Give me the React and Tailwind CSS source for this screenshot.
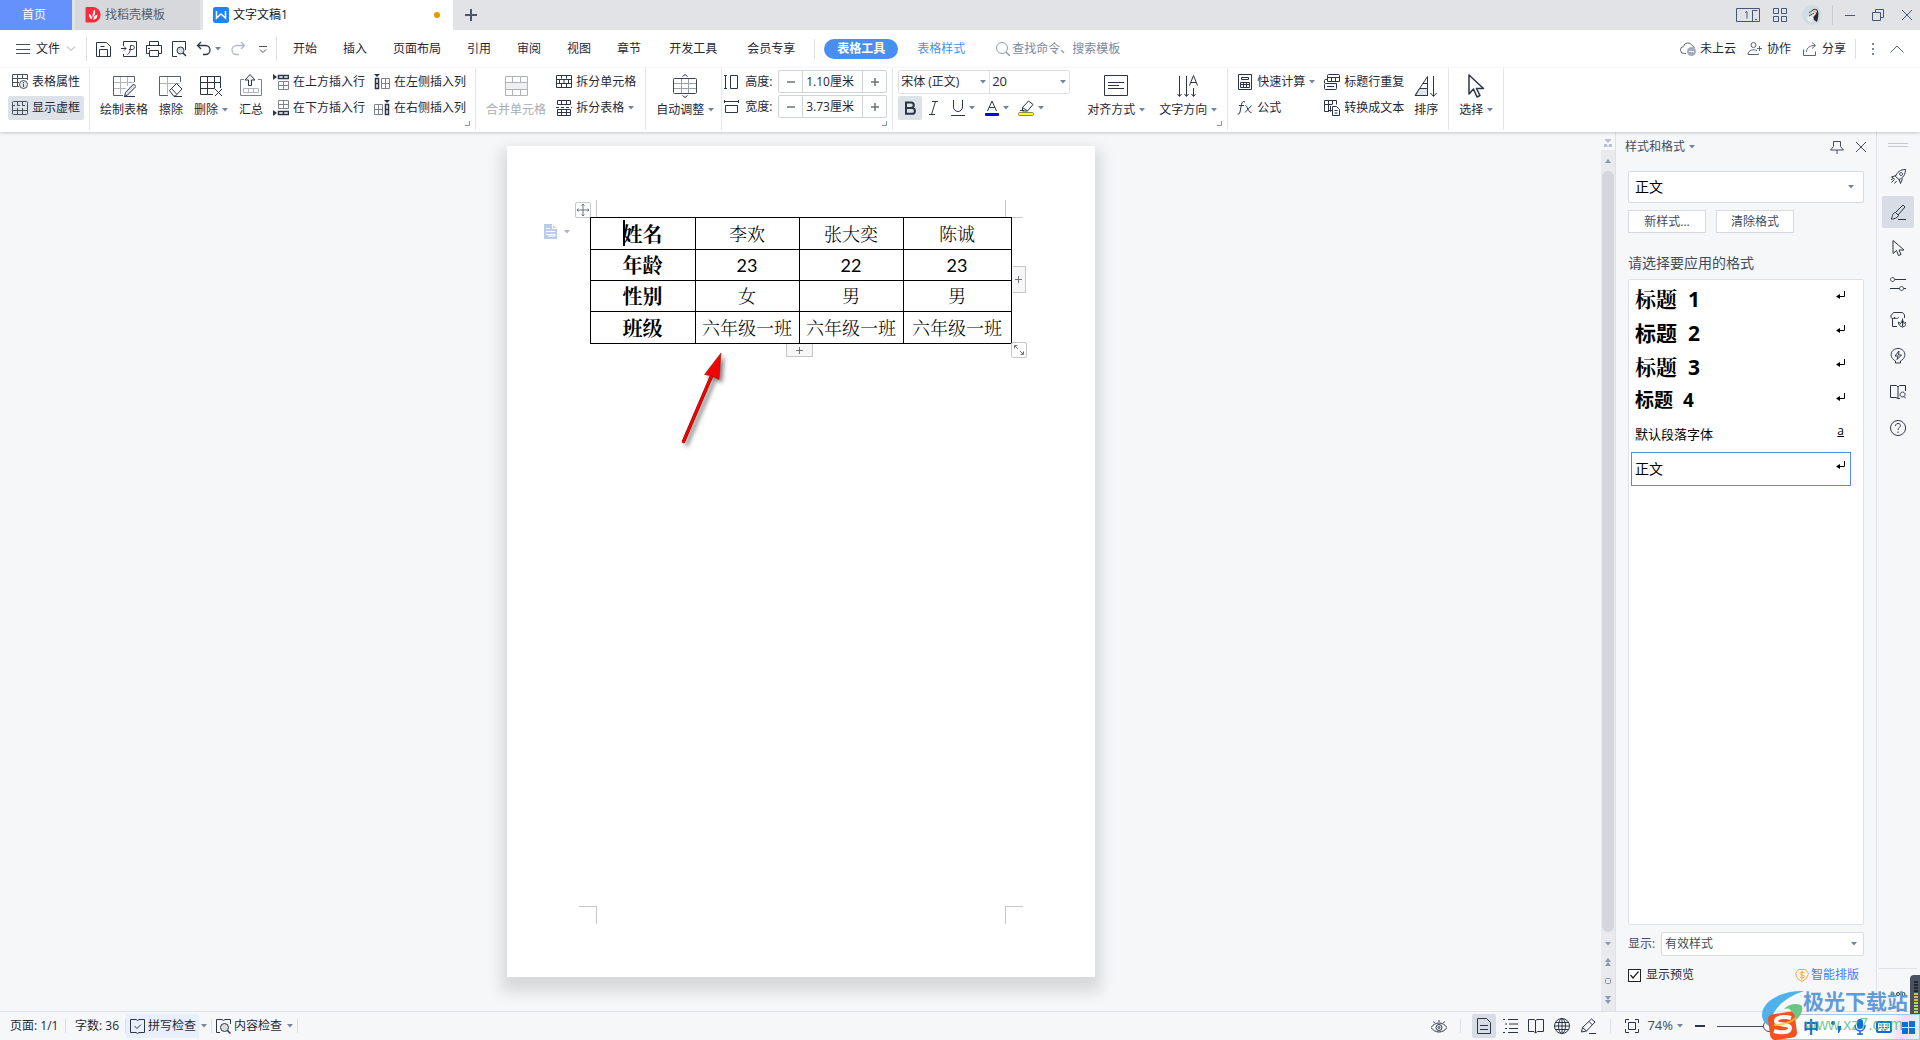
import React, { useState } from "react";

// Shared wrapper for the line icons. Half-pixel coordinates keep strokes crisp.
const Icon = ({ w = 16, h = 16, className = "text-[#2c3547]", children }) => (
  <svg
    width={w}
    height={h}
    viewBox={`0 0 ${w} ${h}`}
    fill="none"
    stroke="currentColor"
    className={`shrink-0 ${className}`}
    aria-hidden="true"
  >
    {children}
  </svg>
);

const Caret = ({ className = "text-[#77839c]" }) => (
  <Icon w={6} h={4} className={className}>
    <path d="M0 0h6L3 3.5z" fill="currentColor" stroke="none" />
  </Icon>
);

const Sep = ({ className = "mx-[5px]" }) => (
  <div className={`h-[62px] w-px shrink-0 bg-[#e6e7ea] ${className}`} />
);

const Corner = () => (
  <Icon w={5} h={5} className="absolute right-0 bottom-1 text-[#8a96ad]">
    <path d="M4.5 0v4.5H0" />
  </Icon>
);

const BigButton = ({ icon, label, caret, className = "text-[#1f2838]" }) => (
  <button className={`flex flex-col items-center gap-1 px-[5px] pt-1.5 ${className}`}>
    {icon}
    <span className="flex h-4 items-center gap-1">
      {label}
      {caret && <Caret />}
    </span>
  </button>
);

const SmallButton = ({ icon, label, caret, active }) => (
  <button
    className={`flex h-6 items-center gap-1 rounded-xs px-1 ${active ? "bg-[#dde2e8]" : ""}`}
  >
    {icon}
    <span className="flex items-center gap-1">
      {label}
      {caret && <Caret />}
    </span>
  </button>
);

const TitleBar = () => (
  <header className="flex h-[30px] shrink-0 items-center bg-[#e1e3e7]">
    <button className="h-full w-[72px] bg-[#6591fd] pr-1 text-white">首页</button>
    <button className="ml-[3px] flex h-full w-[125px] items-center gap-1 bg-[#d6d8dc] pl-2.5 text-[#555d6b]">
      <Icon>
        <path
          d="M1 0h7a7.5 7.5 0 0 1 7.500 7.500v.5A7.500 7.500 0 0 1 8 15.500H1.500a1 1 0 0 1-1-1V1z"
          fill="#fa2a3c"
          stroke="none"
        />
        <path
          d="M9.500 2.500c1.500 3 .5 6-2 8 0-3 .5-6 2-8zM4 6.500c2 1 3 3 3 6-2.500-1-3.500-3.500-3-6zM12.500 7.500c0 3-1.500 5-4.500 5.500.5-3 2-5 4.500-5.500z"
          fill="#fff"
          stroke="none"
        />
      </Icon>
      找稻壳模板
    </button>
    <button className="ml-[3px] flex h-full w-[250px] items-center gap-1 bg-white pr-[13px] pl-2.5 text-[#111827]">
      <Icon>
        <rect width="16" height="16" rx="2.500" fill="#1a86fb" stroke="none" />
        <path d="M3.500 4v7l4.500-4 4.500 4V4" stroke="#fff" strokeWidth="1.500" />
      </Icon>
      文字文稿1
      <span className="ml-auto size-1.5 rounded-full bg-[#e79a00]" />
    </button>
    <button aria-label="新建" className="ml-3">
      <Icon w={12} h={12} className="text-[#4a5670]">
        <path d="M6 0v12M0 6h12" strokeWidth="2" />
      </Icon>
    </button>
    <div className="ml-auto flex items-center pr-[7px] text-[#46557a]">
      <button aria-label="设备">
        <Icon w={24} h={14} className="text-[#46557a]">
          <path d="M.5.500h23v13H.5zM16.500 13.500v-11h5M9 4.500l2-1v7M19 11.500h2" />
        </Icon>
      </button>
      <button aria-label="应用" className="ml-[13px]">
        <Icon w={14} h={14} className="text-[#46557a]">
          <path d="M.5.500h5v5h-5zM8.500.500h5v5h-5zM.5 8.500h5v5h-5zM8.500 8.500h5v5h-5z" />
        </Icon>
      </button>
      <svg width="20" height="20" viewBox="0 0 20 20" className="ml-[15px]" aria-hidden="true">
        <circle cx="10" cy="10" r="10" fill="#cfdde3" />
        <path d="M10 6c1-3 5-3 6 0 1 3 0 8-1 11l-3-2-1-5z" fill="#2b2730" />
        <path d="M5 12l4-2 1-4 3-1 1 4-3 3-1 5-4-1z" fill="#e9ecef" />
        <path d="M7 8l4-3M7 11l5-3" stroke="#4b4045" />
        <circle cx="13" cy="6.500" r="2" fill="#eab9a8" />
      </svg>
      <div className="ml-2.5 h-5 w-px bg-[#c8cbd1]" />
      <button aria-label="最小化" className="ml-3">
        <Icon w={10} h={12} className="text-[#46557a]">
          <path d="M0 6.500h10" />
        </Icon>
      </button>
      <button aria-label="还原" className="ml-[17px]">
        <Icon w={12} h={12} className="text-[#46557a]">
          <path d="M.5 3.500h8v8h-8zM3.500 3V.500h8v8H9" />
        </Icon>
      </button>
      <button aria-label="关闭" className="ml-[17px]">
        <Icon w={12} h={12} className="text-[#46557a]">
          <path d="M1 1l10 10M11 1L1 11" />
        </Icon>
      </button>
    </div>
  </header>
);

const menuTabs = ["开始", "插入", "页面布局", "引用", "审阅", "视图", "章节"];
const extraTabs = ["开发工具", "会员专享"];

const MenuRow = () => (
  <nav className="flex h-[38px] shrink-0 items-center text-[#1f2838]">
    <button className="ml-4 flex items-center gap-1.5">
      <Icon w={14} h={10} className="text-[#4a5260]">
        <path d="M0 .5h14M0 5.500h14M0 9.500h14" />
      </Icon>
      文件
      <Icon w={10} h={6} className="text-[#9aa3b2]">
        <path d="M1 .5l4 4 4-4" />
      </Icon>
    </button>
    <div className="ml-2.5 h-6 w-px bg-[#dddfe3]" />
    <div className="ml-[9px] flex items-center gap-[9px]">
      <button aria-label="保存">
        <Icon>
          <path d="M14.500 15.500H.5v-14h10l4 4zM3.500 15V8.500h8V15M4.500 5.500h4" />
        </Icon>
      </button>
      <button aria-label="输出为PDF">
        <Icon>
          <path d="M2.500 5V.500h13v15h-13V13M0 7.500h5M3 5.500l2 2-2 2M6.500 13.500c2-1 3-4 3-9h2c2.500 0 2.500 4 0 4H8" />
        </Icon>
      </button>
      <button aria-label="打印">
        <Icon>
          <path d="M3.500 4.500v-4h9v4M3.500 12.500h-3v-8h15v8h-3M3.500 9.500h9v6h-9zM2 7.500h2" />
        </Icon>
      </button>
      <button aria-label="打印预览">
        <Icon>
          <path d="M6 15.500H1.500V.500h13V9" />
          <circle cx="9.500" cy="9.500" r="3.500" fill="#d9dde2" />
          <path d="M12 12l3 3" strokeWidth="1.500" />
        </Icon>
      </button>
      <button aria-label="撤销" className="flex items-center gap-[3px]">
        <Icon>
          <path d="M5 1L1.500 4.500 5 8M2 4.500h7.500a4.500 4.500 0 0 1 0 9H7" strokeWidth="1.300" />
        </Icon>
        <Caret />
      </button>
      <button aria-label="恢复">
        <Icon className="text-[#b4bac4]">
          <path d="M11 1l3.500 3.500L11 8M14 4.500H6.500a4.500 4.500 0 0 0 0 9H9" strokeWidth="1.300" />
        </Icon>
      </button>
      <button aria-label="自定义快速访问工具栏">
        <Icon className="text-[#4a5260]">
          <path d="M4 5.500h8M5 8.500l3 3 3-3" />
        </Icon>
      </button>
    </div>
    <div className="ml-[5px] h-6 w-px bg-[#dddfe3]" />
    <div className="ml-[3px] flex items-center">
      {menuTabs.map((tab) => (
        <button key={tab} className="px-[13px]">
          {tab}
        </button>
      ))}
      {extraTabs.map((tab) => (
        <button key={tab} className="px-[15px]">
          {tab}
        </button>
      ))}
    </div>
    <div className="ml-1 h-5 w-px bg-[#dddfe3]" />
    <button className="ml-[9px] h-5 w-[74px] rounded-full bg-[#4a8ff0] font-bold text-white">
      表格工具
    </button>
    <button className="ml-[19px] text-[#4a8ff0]">表格样式</button>
    <label className="ml-[31px] flex items-center gap-0.5">
      <Icon w={14} h={14} className="text-[#8f9ab0]">
        <circle cx="6" cy="6" r="5.500" />
        <path d="M10 10l4 4" strokeWidth="1.500" />
      </Icon>
      <input
        aria-label="查找命令"
        placeholder="查找命令、搜索模板"
        className="w-[120px] bg-transparent outline-none placeholder:text-[#7b88a1]"
      />
    </label>
    <div className="ml-auto flex items-center gap-[11px] pr-4">
      <button className="flex items-center gap-1">
        <Icon className="text-[#5a6577]">
          <path d="M6 12.500H4.500a3.500 3.500 0 0 1-1-7 4.500 4.500 0 0 1 8.500-1 3.500 3.500 0 0 1 2.500 2.500" />
          <circle cx="11.500" cy="10.500" r="4.500" fill="#a4abbd" stroke="none" />
          <path d="M9 10.500h5" stroke="#fff" />
        </Icon>
        未上云
      </button>
      <button className="flex items-center gap-1">
        <Icon className="text-[#5a6577]">
          <circle cx="6.500" cy="4" r="2.500" />
          <path d="M10 9.500c-3-1.500-9-1-9 4h10.500v-1M10 7.500h5M12.500 5v5" />
        </Icon>
        协作
      </button>
      <button className="flex items-center gap-1">
        <Icon className="text-[#5a6577]">
          <path d="M1.500 8.500v6h12v-4M4.500 11c0-4 3-6.500 8.500-6.500M10 1.500l3.500 3-3.500 3" />
        </Icon>
        分享
      </button>
      <div className="-ml-0.5 h-5 w-px bg-[#dddfe3]" />
      <button aria-label="更多" className="pl-1">
        <Icon w={4} h={12} className="text-[#7b8494]">
          <path d="M1 0h2v2H1zM1 5h2v2H1zM1 10h2v2H1z" fill="currentColor" stroke="none" />
        </Icon>
      </button>
      <button aria-label="收起功能区" className="pl-1">
        <Icon w={14} h={8} className="text-[#5a6577]">
          <path d="M.5 7.500L7 1l6.500 6.500" />
        </Icon>
      </button>
    </div>
  </nav>
);

const SpinBox = ({ id, label, value, icon }) => (
  <div className="flex h-[23px] items-center">
    {icon}
    <label htmlFor={id} className="ml-[5px] w-[33px]">
      {label}
    </label>
    <div className="flex h-full w-[109px] items-center rounded-xs border border-[#cfd3da]">
      <button aria-label={`减小${label}`} className="flex h-full w-6 items-center justify-center border-r border-[#cfd3da]">
        <Icon w={8} h={8} className="text-[#6d727b]">
          <path d="M0 4h8" strokeWidth="1.500" />
        </Icon>
      </button>
      <input id={id} defaultValue={value} className="w-[59px] pl-[3px] outline-none" />
      <button aria-label={`增大${label}`} className="flex h-full w-6 items-center justify-center border-l border-[#cfd3da]">
        <Icon w={8} h={8} className="text-[#6d727b]">
          <path d="M0 4h8M4 0v8" strokeWidth="1.500" />
        </Icon>
      </button>
    </div>
  </div>
);

const Ribbon = () => (
  <section className="relative z-10 flex h-16 shrink-0 items-start bg-white pl-2 text-[#1f2838] shadow-[0_1px_3px_rgba(0,0,0,0.2)]">
    <div className="flex flex-col gap-0.5 pt-0.5">
      <SmallButton
        label="表格属性"
        icon={
          <Icon className="text-[#4a5260]">
            <path d="M7 12.500H.5V.500h15V6M.5 4.500h15M.5 8.500H7M5.500.500v12M10.500.500V5" />
            <circle cx="11.500" cy="10.500" r="4" fill="#e6e8eb" />
            <path d="M11.500 9.500V13M11.500 8v1" />
          </Icon>
        }
      />
      <SmallButton
        active
        label="显示虚框"
        icon={
          <Icon className="text-[#4a5260]">
            <rect x=".5" y="1.500" width="15" height="13" rx="1" />
            <path d="M0 5.500h3m2 0h3m2 0h3m2 0h1M1 10.500h14M5.500 2v3m0 3v6M10.500 2v3m0 3v6" />
          </Icon>
        }
      />
    </div>
    <Sep />
    <div className="relative flex h-[62px] items-start gap-px">
      <BigButton
        label="绘制表格"
        icon={
          <Icon w={24} h={24}>
            <path d="M2 8.500h20M2 14.500h12M8.500 2v18M15.500 2v10" stroke="#b0b5bd" />
            <path d="M11 21.500H1.500v-19h21V8" stroke="#565e6b" />
            <path d="M12.500 22.500l1-4 8-8.500 2.500 2.500-8.500 8.500zM12 22.500h11" fill="#dfe3e7" />
          </Icon>
        }
      />
      <BigButton
        label="擦除"
        icon={
          <Icon w={24} h={24}>
            <path d="M1 9.500h20M8.500 2v18" stroke="#b0b5bd" />
            <path d="M9 21.500H.5v-19h21V8" stroke="#565e6b" />
            <path d="M10.500 16.500l7-7 5.500 5.500-6.500 7h-2zM12 14l5.500 6M15 22.500h8" fill="#fff" />
          </Icon>
        }
      />
      <BigButton
        caret
        label="删除"
        icon={
          <Icon w={24} h={24}>
            <path d="M14 20.500H1.500v-18h20V14M1.500 8.500h20M1.500 14.500h14M8.500 2.500v18M15.500 2.500v12M16 15l7 7M23 15l-7 7" />
          </Icon>
        }
      />
      <BigButton
        label="汇总"
        icon={
          <Icon w={24} h={24}>
            <path d="M5 5.500H1.500v16h21v-16H19" stroke="#7c838e" />
            <path d="M4.500 14.500h15v4h-15zM9.500 14.500v4M14.500 14.500v4" stroke="#b0b5bd" />
            <path d="M9.500 11.500V6H6l5-5.500L16 6h-3.500v5.500z" fill="#f1f2f4" />
          </Icon>
        }
      />
      <div className="flex flex-col gap-0.5 pt-0.5">
        <SmallButton
          label="在上方插入行"
          icon={
            <Icon>
              <path d="M0 0l4 3-4 3z" fill="currentColor" stroke="none" />
              <path d="M5.500 1.500h10v3h-10zM10.500 1.500v3" strokeWidth="1.500" />
              <path d="M5.500 7.500h10v8h-10zM5.500 11.500h10M10.500 7.500v8" stroke="#7c838e" />
            </Icon>
          }
        />
        <SmallButton
          label="在下方插入行"
          icon={
            <Icon>
              <path d="M0 10l4 3-4 3z" fill="currentColor" stroke="none" />
              <path d="M5.500 11.500h10v3h-10zM10.500 11.500v3" strokeWidth="1.500" />
              <path d="M5.500.500h10v8h-10zM5.500 4.500h10M10.500.500v8" stroke="#7c838e" />
            </Icon>
          }
        />
      </div>
      <div className="flex flex-col gap-0.5 pt-0.5">
        <SmallButton
          label="在左侧插入列"
          icon={
            <Icon>
              <path d="M0 0h6L3 3z" fill="currentColor" stroke="none" />
              <path d="M1.500 4.500h3v10h-3zM1.500 9.500h3" strokeWidth="1.500" />
              <path d="M7.500 4.500h8v10h-8zM7.500 9.500h8M11.500 4.500v10" stroke="#7c838e" />
            </Icon>
          }
        />
        <SmallButton
          label="在右侧插入列"
          icon={
            <Icon>
              <path d="M10 0h6l-3 3z" fill="currentColor" stroke="none" />
              <path d="M11.500 4.500h3v10h-3zM11.500 9.500h3" strokeWidth="1.500" />
              <path d="M.5 4.500h8v10h-8zM.5 9.500h8M4.500 4.500v10" stroke="#7c838e" />
            </Icon>
          }
        />
      </div>
      <Corner />
    </div>
    <Sep />
    <div className="flex items-start gap-px">
      <BigButton
        label="合并单元格"
        className="text-[#a9adb5]"
        icon={
          <Icon w={24} h={24} className="text-[#b0b3b8]">
            <path d="M1.500 2.500h22v19h-22zM8.500 3v5M16.500 3v5M8.500 16v5M16.500 16v5" />
            <path d="M1.500 8.500h22v7h-22z" fill="#eff0f1" />
          </Icon>
        }
      />
      <div className="flex flex-col gap-0.5 pt-0.5">
        <SmallButton
          label="拆分单元格"
          icon={
            <Icon>
              <path d="M.5 1.500h15v12H.5zM.5 5.500h15M.5 9.500h15M5.500 1.500v3M10.500 1.500v3M8 5.500v4M5.500 9.500v4M10.500 9.500v4M3.500 5.500v4M12.500 5.500v4" />
            </Icon>
          }
        />
        <SmallButton
          caret
          label="拆分表格"
          icon={
            <Icon>
              <path d="M1.500 4.500v-4h13v4zM5.500.500v4M10.500.500v4M0 7.500h3m2 0h3m2 0h3m2 0h1M1.500 9.500h13v6h-13zM1.500 12.500h13M5.500 9.500v6M10.500 9.500v6" />
            </Icon>
          }
        />
      </div>
    </div>
    <Sep />
    <BigButton
      caret
      label="自动调整"
      icon={
        <Icon w={24} h={24}>
          <path d="M1 9.500h22M1 14.500h22M8.500 5v14M15.500 5v14" stroke="#9aa0aa" />
          <rect x=".5" y="4.500" width="23" height="15" rx="1" stroke="#3c4454" />
          <path d="M9.500 2.500l2.500-2 2.500 2M9.500 21.500l2.500 2 2.500-2" />
        </Icon>
      }
    />
    <Sep className="mr-0.5 ml-0.5" />
    <div className="relative flex h-[62px] flex-col gap-0.5 pt-0.5">
      <SpinBox
        id="row-height"
        label="高度:"
        value="1.10厘米"
        icon={
          <Icon>
            <path d="M1.500 1.500v13M0 1.500h3M0 14.500h3M6.500 1.500h7v13h-7z" />
          </Icon>
        }
      />
      <SpinBox
        id="col-width"
        label="宽度:"
        value="3.73厘米"
        icon={
          <Icon>
            <path d="M.5 2.500h14M.5 1v3M14.500 1v3M1.500 6.500h12v7h-12z" />
          </Icon>
        }
      />
      <Corner />
    </div>
    <Sep />
    <div className="flex flex-col gap-0.5 pt-0.5">
      <div className="flex h-6 rounded-xs border border-[#dcdfe4]">
        <div className="flex w-[90px] items-center pr-[3px] pl-0.5">
          <select aria-label="字体" className="w-0 flex-1 appearance-none outline-none">
            <option>宋体 (正文)</option>
          </select>
          <Caret />
        </div>
        <div className="flex w-20 items-center border-l border-[#dcdfe4] pr-[3px] pl-0.5">
          <select aria-label="字号" className="w-0 flex-1 appearance-none text-[13px] outline-none">
            <option>20</option>
          </select>
          <Caret />
        </div>
      </div>
      <div className="flex h-6 items-center">
        <button aria-label="加粗" className="flex size-6 items-center justify-center rounded-xs bg-[#dde2e8]">
          <Icon w={14} h={14}>
            <path d="M3 1.500h5a2.700 2.700 0 0 1 0 5.500H3zM3 7h6a2.900 2.900 0 0 1 0 5.800H3z" strokeWidth="2" />
          </Icon>
        </button>
        <button aria-label="倾斜" className="flex size-6 items-center justify-center">
          <Icon w={10} h={16}>
            <path d="M3 1.500h6M0 14.500h6M6.500 1.500l-4 13" />
          </Icon>
        </button>
        <button aria-label="下划线" className="flex w-[34px] items-center justify-center gap-1">
          <Icon w={14} h={16}>
            <path d="M2.500 0v7a4.500 4.500 0 0 0 9 0V0M0 15.500h14" />
          </Icon>
          <Caret />
        </button>
        <button aria-label="字体颜色" className="flex w-[34px] items-center justify-center gap-1">
          <Icon w={14} h={16}>
            <path d="M2.500 11L7 1l4.500 10M4 7.500h6" />
            <rect y="13" width="14" height="3" rx="1" fill="#00f" stroke="none" />
          </Icon>
          <Caret />
        </button>
        <button aria-label="突出显示" className="flex w-[34px] items-center justify-center gap-1">
          <Icon>
            <path d="M4.500 7.500l6-6.500 4.500 3.500-5.500 6.500h-5zM4.500 7.500l5 3.500M6 10.500h-4" />
            <rect x=".5" y="12.500" width="15" height="3" rx="1" fill="#ff0" stroke="#8b8b55" />
          </Icon>
          <Caret />
        </button>
      </div>
    </div>
    <div className="relative ml-3 flex h-[62px] items-start gap-1">
      <BigButton
        caret
        label="对齐方式"
        icon={
          <Icon w={24} h={24}>
            <path d="M.5 1.500h23v20H.5zM4 8.500h16M4 11.500h11M4 14.500h16" />
          </Icon>
        }
      />
      <BigButton
        caret
        label="文字方向"
        icon={
          <Icon w={24} h={24}>
            <path d="M3.500 2v20M1.500 20l2 2.500 2-2.500M10.500 2v20M8.500 20l2 2.500 2-2.500M17.500 14v8M15.500 20l2 2.500 2-2.500M13.500 11.500L17.500 1.500l4 10M15 8.500h5" />
          </Icon>
        }
      />
      <Corner />
    </div>
    <Sep />
    <div className="flex items-start gap-px">
      <div className="flex flex-col gap-0.5 pt-0.5">
        <SmallButton
          caret
          label="快速计算"
          icon={
            <Icon>
              <path d="M1.500.500h13v15h-13zM4.500 3.500h7v2h-7zM3.500 8.500h9v5h-9zM3.500 10.500h9M6.500 8.500v5M9.500 8.500v5" />
            </Icon>
          }
        />
        <SmallButton
          label="公式"
          icon={
            <Icon>
              <path d="M8 2c-2-1-3 0-3.500 2.500L3 12c-.5 2-1.500 2.500-2.500 2M2 5.500h5M8.500 5.500c2 0 2 7 6 7M14.500 5.500L8 12.500" />
            </Icon>
          }
        />
      </div>
      <div className="flex flex-col gap-0.5 pt-0.5">
        <SmallButton
          label="标题行重复"
          icon={
            <Icon>
              <path d="M3.500 3.500v-2a1 1 0 0 1 1-1h10a1 1 0 0 1 1 1v4M3.500 3.500h12v4h-12zM7.500 3.500v4M11.500 3.500v4M3 9.500H1.500a1 1 0 0 0-1 1v4a1 1 0 0 0 1 1h10a1 1 0 0 0 1-1V9.500H2M3 12.500h7M.5 9V6.500a1 1 0 0 1 1-1h2" />
            </Icon>
          }
        />
        <SmallButton
          label="转换成文本"
          icon={
            <Icon>
              <path d="M5 11.500H.5V.500h12v4M.5 4.500H8M4.500.500v11M8.500.500v4M6.500 6v5M4.500 9.500l2 2 2-2M8.500 15.500v-9h4l3 3v6zM10.500 10.500h3M10.500 13h3" />
            </Icon>
          }
        />
      </div>
      <BigButton
        label="排序"
        icon={
          <Icon w={24} h={24}>
            <path d="M1 21.500L13.500 2.500v19zM8.500 9.500h5M5.500 14.500h8" />
            <path d="M1.500 21.500l4-7h8v7z" fill="#e3e5e8" />
            <path d="M19.500 2v20M16.500 19l3 3.500 3-3.500" />
          </Icon>
        }
      />
    </div>
    <Sep />
    <BigButton
      caret
      label="选择"
      icon={
        <Icon w={24} h={24}>
          <path d="M5 1v19l4.500-5 3.500 8 3-1.500-3.500-7h7z" strokeWidth="1.500" strokeLinejoin="round" />
        </Icon>
      }
    />
    <Sep />
  </section>
);

const rows = [
  { head: "姓名", cells: ["李欢", "张大奕", "陈诚"], className: "h-8" },
  { head: "年龄", cells: ["23", "22", "23"], className: "h-[31px] font-normal" },
  { head: "性别", cells: ["女", "男", "男"], className: "h-[31px]" },
  { head: "班级", cells: ["六年级一班", "六年级一班", "六年级一班"], className: "h-8" },
];

const DocumentPage = () => (
  <main className="flex min-w-0 flex-1 justify-center overflow-hidden pt-3.5">
    <article className="relative h-[831px] w-[588px] shrink-0 bg-white pt-[71px] pl-[83px] shadow-[0_9px_14px_6px_rgba(0,0,0,0.12)]">
      {/* page margin marks */}
      <svg className="absolute inset-0 size-full" viewBox="0 0 588 831" fill="none" stroke="#c4c6c8" aria-hidden="true">
        <path d="M89.500 54v17M72 71.500h18M498.500 54v17M498 71.500h18M89.500 778v-18M72 760.500h18M498.500 778v-18M498 760.500h18" />
      </svg>
      <table className="relative w-[422px] table-fixed border-collapse bg-white text-center font-['Lato','Noto_Serif_CJK_SC','Noto_Sans_CJK_SC',sans-serif] text-lg leading-6 text-black">
        <colgroup>
          <col className="w-[105px]" />
          <col className="w-[104px]" />
          <col className="w-[104px]" />
          <col className="w-[108px]" />
        </colgroup>
        <tbody className="font-light">
          {rows.map((row) => (
            <tr key={row.head} className={row.className}>
              <th scope="row" className="border border-black p-0 text-xl leading-6 font-bold">
                {row.head}
              </th>
              {row.cells.map((cell, i) => (
                <td key={i} className="border border-black p-0">
                  {cell}
                </td>
              ))}
            </tr>
          ))}
        </tbody>
      </table>
      {/* text cursor */}
      <span className="absolute top-[74px] left-[116px] h-[26px] w-0.5 bg-black" />
      <button aria-label="移动表格" className="absolute top-14 left-[68px] rounded-xs border border-[#c4c6c8] bg-white">
        <Icon w={14} h={14} className="text-[#6d727b]">
          <path d="M7 1v12M1 7h12M5.500 2.500L7 1l1.500 1.500M5.500 11.500L7 13l1.500-1.500M2.500 5.500L1 7l1.500 1.500M11.500 5.500L13 7l-1.500 1.500" />
        </Icon>
      </button>
      <button aria-label="段落选项" className="absolute top-[78px] left-[37px] flex items-center gap-[7px]">
        <Icon w={13} h={15}>
          <path d="M0 0h8l5 5v10H0z" fill="#b9cdea" stroke="none" />
          <path d="M8.500 0v4.500H13M2 4.500h4M2 7.500h9M2 10.500h9v1.500H4" stroke="#fff" />
        </Icon>
        <Caret className="text-[#b0b5bd]" />
      </button>
      <button aria-label="添加列" className="absolute top-[120px] left-[506px] flex h-[27px] w-[13px] items-center justify-center border border-l-0 border-[#c4c6c8] bg-[#f7f7f7]">
        <Icon w={7} h={7} className="text-[#6d727b]">
          <path d="M3.500 0v7M0 3.500h7" />
        </Icon>
      </button>
      <button aria-label="添加行" className="absolute top-[198px] left-[279px] flex h-[13px] w-[27px] items-center justify-center border border-t-0 border-[#c4c6c8] bg-[#f7f7f7]">
        <Icon w={7} h={7} className="text-[#6d727b]">
          <path d="M3.500 0v7M0 3.500h7" />
        </Icon>
      </button>
      <button aria-label="调整表格大小" className="absolute top-[196px] left-[504px] rounded-xs border border-[#c4c6c8] bg-white">
        <Icon w={14} h={14} className="text-[#6d727b]">
          <path d="M2.500 5.500v-3h3M3 3l3 3M11.500 8.500v3h-3M11 11L8 8" />
        </Icon>
      </button>
      {/* annotation arrow */}
      <svg className="absolute top-[204px] left-[168px] drop-shadow-[3px_3px_2px_rgba(0,0,0,0.5)]" width="52" height="96" viewBox="0 0 52 96" aria-hidden="true">
        <path d="M8.500 91.500L37 25" stroke="#8c1010" strokeWidth="3.500" strokeLinecap="round" />
        <path d="M8.500 91.500L37 25" stroke="#f40000" strokeWidth="2.500" strokeLinecap="round" />
        <path d="M46 3L29.500 24.500l7.500 1.500 7 3.500z" fill="#f40000" stroke="#8c1010" strokeWidth=".5" />
      </svg>
    </article>
  </main>
);

const ScrollBar = () => (
  <div className="flex w-3.5 shrink-0 flex-col items-center">
    <div className="flex h-[18px] items-center pt-1">
      <Icon w={8} h={8}>
        <path d="M1 0h6v1L4.500 3.500h-1L1 1zM0 5h3v3H0zM5 5h3v3H5zM3 6.500h2v1H3z" fill="#b9c0cf" stroke="none" />
      </Icon>
    </div>
    <div className="flex w-full flex-1 flex-col items-center bg-[#e9eaee]">
      <div className="flex h-[21px] items-center">
        <Icon w={6} h={4} className="text-[#8a96ad]">
          <path d="M0 4h6L3 0z" fill="currentColor" stroke="none" />
        </Icon>
      </div>
      <div className="w-3 flex-1 rounded-full bg-[#d4d6de]" />
      <div className="flex h-[79px] flex-col items-center gap-3 pt-2.5">
        <Caret className="text-[#8a96ad]" />
        <Icon w={6} h={8} className="text-[#8a96ad]">
          <path d="M0 4h6L3 0zM0 8h6L3 4z" fill="currentColor" stroke="none" />
        </Icon>
        <Icon w={6} h={6} className="text-[#8a96ad]">
          <rect x=".5" y=".5" width="5" height="5" rx="1" />
        </Icon>
        <Icon w={6} h={8} className="text-[#8a96ad]">
          <path d="M0 0h6L3 4zM0 4h6L3 8z" fill="currentColor" stroke="none" />
        </Icon>
      </div>
    </div>
  </div>
);

const styleItems = [
  { name: "标题 1", className: "font-['Noto_Sans','Noto_Serif_CJK_SC',serif] text-[21px] font-bold" },
  { name: "标题 2", className: "font-['Noto_Sans','Noto_Sans_CJK_SC',sans-serif] text-[21px] font-bold" },
  { name: "标题 3", className: "font-['Noto_Sans','Noto_Serif_CJK_SC',serif] text-[21px] font-bold" },
  { name: "标题 4", className: "font-['Noto_Sans','Noto_Sans_CJK_SC',sans-serif] text-[19px] font-bold" },
  { name: "默认段落字体", className: "text-[13px]" },
  { name: "正文", className: "text-sm" },
];

const ReturnMark = () => (
  <Icon w={10} h={9} className="text-black">
    <path d="M8.500 0v5.500H2" />
    <path d="M0 5.500l4-2.500v5z" fill="currentColor" stroke="none" />
  </Icon>
);

const StylePanel = () => {
  const [selected, setSelected] = useState("正文");
  const [preview, setPreview] = useState(true);

  return (
    <aside className="flex w-[262px] shrink-0 flex-col border-x border-[#dfe1e6] px-3 text-[#434b5c]">
      <div className="-mr-0.5 -ml-[3px] flex h-[30px] items-center gap-1 text-xs">
        样式和格式
        <Caret />
        <button aria-label="固定" className="ml-auto">
          <Icon w={14} h={14} className="text-[#434b5c]">
            <path d="M3.500 1.500h7v5l3 3.500h-13l3-3.500zM7 10v4" />
          </Icon>
        </button>
        <button aria-label="关闭窗格" className="ml-2">
          <Icon w={10} h={10} className="text-[#434b5c]">
            <path d="M0 0l10 10M10 0L0 10" />
          </Icon>
        </button>
      </div>
      <div className="mt-[9px] flex h-8 shrink-0 items-center rounded-xs border border-[#d7dae1] bg-white pr-[9px] pl-1.5">
        <select aria-label="当前样式" className="flex-1 appearance-none text-sm text-black outline-none">
          <option>正文</option>
        </select>
        <Caret />
      </div>
      <div className="mt-[7px] flex gap-2.5">
        <button className="h-[23px] w-[78px] border border-[#d7dae1] bg-white">新样式...</button>
        <button className="h-[23px] w-[78px] border border-[#d7dae1] bg-white">清除格式</button>
      </div>
      <h2 className="mt-5 mb-1.5 text-sm leading-5">请选择要应用的格式</h2>
      <ul className="min-h-0 flex-1 rounded-xs border border-[#dfe1e6] bg-white pt-0.5 pr-3 pl-0.5 text-black">
        {styleItems.map((item) => (
          <li key={item.name}>
            <button
              onClick={() => setSelected(item.name)}
              className={`flex h-[34px] w-full items-center justify-between border pr-1 pl-[3px] ${
                selected === item.name ? "border-[#4a8fe6]" : "border-transparent"
              }`}
            >
              <span className={`whitespace-pre ${item.className}`}>{item.name.replace(" ", "  ")}</span>
              <span className="pb-2">
                {item.name === "默认段落字体" ? (
                  <span className="pr-0.5 text-xs leading-3 underline">a</span>
                ) : (
                  <ReturnMark />
                )}
              </span>
            </button>
          </li>
        ))}
      </ul>
      <div className="mt-[7px] flex items-center">
        <label htmlFor="style-filter" className="w-[33px]">
          显示:
        </label>
        <div className="flex h-6 flex-1 items-center rounded-xs border border-[#d7dae1] bg-white pr-1.5 pl-[3px]">
          <select id="style-filter" className="flex-1 appearance-none outline-none">
            <option>有效样式</option>
          </select>
          <Caret />
        </div>
      </div>
      <div className="mt-[11px] mb-7 flex h-4 items-center">
        <label className="flex items-center gap-[5px] text-[#1f2838]">
          <span className="grid size-[13px] place-items-center">
            <input
              type="checkbox"
              checked={preview}
              onChange={(e) => setPreview(e.target.checked)}
              className="col-start-1 row-start-1 size-[13px] appearance-none border border-[#222] bg-white"
            />
            {preview && (
              <Icon w={9} h={8} className="pointer-events-none col-start-1 row-start-1 text-[#222]">
                <path d="M.5 4l2.500 3 5.500-6.500" strokeWidth="1.200" />
              </Icon>
            )}
          </span>
          显示预览
        </label>
        <a href="#layout" className="mr-[5px] ml-auto flex items-center gap-0.5 text-[#3f7bf5]">
          <Icon w={14} h={14} className="text-[#f0a93a]">
            <path d="M3.500 1.500h7l3 4-2 5-4.500 3-4.500-3-2-5zM9.500 5C8 3.500 5 4 5 5.500c0 2 4.500 1 4.500 3 0 1.500-3 2-4.500.5M7 3v8.500" />
          </Icon>
          智能排版
        </a>
      </div>
    </aside>
  );
};

const sideIcons = [
  {
    label: "快速工具",
    path: "M5.500 8.500C7 4 10.500 1.500 15.500 1.500c0 5-2.500 8.500-6.500 10zM6 7.500L1.500 9l3 2M9 11.500l1.500 4 2-5M4.500 11.500l-3 3M6.500 13l-2 2.500M3 10.500l-2 1.500M11 4.500a1.500 1.500 0 1 0 .1 0",
  },
  {
    label: "样式和格式",
    active: true,
    path: "M5.500 8.500L13 1l2 2-7 8M5.500 8.500l3 3c-1 2.500-4 3.500-7.500 3.500 1-1 1-2 1.500-3.500.500-2 1.500-3 3-3M8 15.500h8",
  },
  { label: "选择窗格", path: "M3 .5v13l3.500-3 2 5 2.500-1-2-4.500h5z" },
  {
    label: "属性",
    path: "M5 3.500h11M2.500 1.500a2 2 0 1 0 .1 0M0 12.500h9.500M11.500 10.500a2 2 0 1 0 .1 0M14 12.500h2",
  },
  {
    label: "稻壳资源",
    path: "M7 14.500H2.500V6M1.500 3l2-2.500h9l2 2.500v3M1 3v2c0 2 3.500 2 3.500 0v2M4.500 5c0 2 4 2 4 0M12.500 6.500v8M12.500 15c-2.500-.500-4-2-4-5l2.500 2M12.500 15c2.500-.500 4-2 3.500-5l-2.500 2M11 11l1.500-3 1.500 3",
  },
  {
    label: "智能助手",
    path: "M5.500 13C-2 9 1 .5 8 .5s10 8.500 2.500 12.500v2h-5zM9 3L5 8h3l-1 3.500L11.500 7h-3z",
  },
  {
    label: "查找内容",
    path: "M8 14.500V3L6.500 1.500h-6v12H6zM8 3l1.500-1.500h6V7M8 14.500h2M12.500 8a2.500 2.500 0 1 0 .1 0M14 12.500l2 2",
  },
  {
    label: "帮助",
    path: "M8 .5a7.500 7.500 0 1 0 .1 0M5.500 6c0-3.500 5-3 5-.5 0 2-2.500 2-2.500 4.500M8 11.500v1.500",
  },
];

const SideStrip = () => (
  <div className="flex w-[43px] shrink-0 flex-col items-center pt-[11px] pr-0.5">
    <div className="mb-[13px] h-1 w-5 border-y border-[#c4c8d0]" />
    <div className="flex flex-col gap-1">
      {sideIcons.map((item) => (
        <button
          key={item.label}
          aria-label={item.label}
          className={`flex size-8 items-center justify-center rounded-xs ${item.active ? "bg-[#d8dde5]" : ""}`}
        >
          <Icon>
            <path d={item.path} />
          </Icon>
        </button>
      ))}
    </div>
    <div className="mt-auto h-px w-[38px] bg-[#dfe1e6]" />
    <button aria-label="更多工具" className="mt-[22px] mb-3.5">
      <Icon w={16} h={6}>
        <circle cx="2.500" cy="3" r="1.500" />
        <circle cx="8" cy="3" r="1.500" />
        <circle cx="13.500" cy="3" r="1.500" />
      </Icon>
    </button>
  </div>
);

const StatusSep = ({ className = "" }) => <div className={`h-3.5 w-px bg-[#dcdfe4] ${className}`} />;

const StatusBar = () => (
  <footer className="flex h-[29px] shrink-0 items-center border-t border-[#dfe1e6] bg-[#f5f7f9] pl-2.5 text-[#1f2838]">
    <span className="w-[55px]">页面: 1/1</span>
    <StatusSep />
    <span className="ml-[9px] w-[50px]">字数: 36</span>
    <StatusSep />
    <button className="flex h-6 items-center gap-[3px] bg-[#e7f0fc] pr-[3px] pl-1">
      <Icon w={15} h={15}>
        <path d="M6 .5H.5v13H6l1.500 1 1.500-1h5.500V.500H9L7.500 1.500zM4.500 7l2.500 2.500 4-4" />
      </Icon>
      拼写检查
    </button>
    <Caret className="ml-0.5 text-[#77839c]" />
    <StatusSep className="ml-1" />
    <button className="ml-1 flex items-center gap-[3px]">
      <Icon w={15} h={15}>
        <path d="M4 13.500H.5V.500H6l1.500 1L9 .5h5.500V5" />
        <circle cx="8.500" cy="8.500" r="4" fill="#d9dde2" />
        <path d="M11.500 11.500l3 3" strokeWidth="1.500" />
      </Icon>
      内容检查
      <Caret className="ml-0.5 text-[#77839c]" />
    </button>
    <StatusSep className="ml-1" />
    <div className="ml-auto flex items-center">
      <button aria-label="护眼模式">
        <Icon>
          <path d="M0 9.500c4-6 12-6 16 0-4 6-12 6-16 0zM8 2v2M2.500 3.500l1 1.500M13.500 3.500l-1 1.500" />
          <circle cx="8" cy="9.500" r="3" />
          <circle cx="8" cy="9.500" r="1" />
        </Icon>
      </button>
      <StatusSep className="ml-[13px]" />
      <button aria-label="页面视图" className="ml-[11px] flex size-6 items-center justify-center rounded-xs bg-[#d8dde5]">
        <Icon>
          <path d="M1.500.500h9l4 4v11h-13zM4 7.500h8M4 11.500h8" />
        </Icon>
      </button>
      <button aria-label="大纲" className="ml-[7px]">
        <Icon>
          <path d="M0 1.500h2M5 1.500h10M2 6h2M6 6h9M2 10.500h2M6 10.500h9M0 14.500h2M5 14.500h10" />
        </Icon>
      </button>
      <button aria-label="阅读版式" className="ml-[9px]">
        <Icon>
          <path d="M7.500 15V2.500L6 1.500H.5v12H6zM7.500 2.500L9 1.500h6.500v12H9.500l-2 1.500" />
        </Icon>
      </button>
      <button aria-label="Web版式" className="ml-2.5">
        <Icon>
          <circle cx="8" cy="8" r="7.500" />
          <ellipse cx="8" cy="8" rx="3.500" ry="7.500" />
          <path d="M.5 8h15M8 .5v15M1.500 4.500h13M1.500 11.500h13" />
        </Icon>
      </button>
      <button aria-label="写作模式" className="ml-2.5">
        <Icon>
          <path d="M1.500 14l1-4.500 9-8.500 3.500 3-8.500 9zM2.500 9.500l4 3.500M9 3.500l3.500 3.500M9 15.500h7" />
        </Icon>
      </button>
      <StatusSep className="ml-3.5" />
      <button aria-label="适合页面" className="ml-3.5">
        <Icon w={14} h={14}>
          <path d="M.5 4V.500H4M10 .5h3.500V4M13.500 10v3.500H10M4 13.500H.5V10M3.500 3.500h7v7h-7z" />
        </Icon>
      </button>
      <button className="ml-2 flex items-center gap-1 text-[13px] text-[#434b5c]">
        74%
        <Caret />
      </button>
      <button aria-label="缩小" className="ml-3">
        <Icon w={10} h={4}>
          <path d="M0 2h10" strokeWidth="2" />
        </Icon>
      </button>
      <input
        type="range"
        aria-label="显示比例"
        min="10"
        max="200"
        defaultValue="74"
        className="mr-[53px] ml-3 h-3 w-[150px] appearance-none bg-[linear-gradient(#434b5c,#434b5c)] bg-[length:100%_1px] bg-center bg-no-repeat [&::-webkit-slider-thumb]:size-3 [&::-webkit-slider-thumb]:appearance-none [&::-webkit-slider-thumb]:rounded-full [&::-webkit-slider-thumb]:border [&::-webkit-slider-thumb]:border-[#434b5c] [&::-webkit-slider-thumb]:bg-white"
      />
    </div>
  </footer>
);

const meterBars = [0, 1, 2, 3, 4, 5, 6, 7, 8, 9, 10];

// Input method toolbar, site logo and level meter floating over the status bar
const FloatingTools = () => (
  <div className="absolute right-0 bottom-0 z-20 h-[65px] w-[160px]">
    <div className="absolute right-0 bottom-0 flex h-[26px] w-[142px] items-center border border-[#a9c6e6] bg-[linear-gradient(100deg,#fff_75%,#f3d9fa_88%,#d9fafa)] pl-6 text-[#0a6fd6]">
      <span className="w-[27px] text-base leading-6 font-bold">中</span>
      <Icon w={12} h={14} className="mr-3 text-[#0a6fd6]">
        <circle cx="3" cy="3" r="2" fill="currentColor" stroke="none" />
        <path d="M8 6h3v3l-2 4H8z" fill="currentColor" stroke="none" />
      </Icon>
      <Icon w={12} h={16} className="mr-2.5 text-[#0a6fd6]">
        <rect x="3" width="6" height="10" rx="3" fill="currentColor" stroke="none" />
        <path d="M1 6c0 8 10 8 10 0M6 12v4M3 15h6" strokeWidth="1.500" />
      </Icon>
      <Icon w={16} h={12} className="mr-2.5 text-[#0a6fd6]">
        <rect x="1" y="1" width="14" height="10" rx="1" strokeWidth="2" />
        <path d="M3 4h10M3 6.500h10M5 9h6" strokeDasharray="2 1" />
      </Icon>
      <Icon w={13} h={13} className="text-[#0a6fd6]">
        <path d="M0 1h6v5H0zM7 0h6v6H7zM0 7h6v6H0zM7 7h6v6H7z" fill="currentColor" stroke="none" />
      </Icon>
    </div>
    <svg className="absolute bottom-0 left-0" width="46" height="52" viewBox="0 0 46 52" aria-hidden="true">
      <path d="M44 3C24 2 2 12 2 27c0 6 5 11 10 12C8 26 22 10 44 3z" fill="#4fb2ea" />
      <path d="M40 6C24 12 14 22 12 32" stroke="#fff" strokeWidth="1.500" fill="none" />
      <path d="M24 21c5-6 15-6 18-3 2 9-8 20-26 22 8-5 16-10 15-17-1-3-4-3-7-2z" fill="#6cc487" />
      <rect x="9" y="25" width="27" height="26" rx="5" fill="#f4511e" transform="rotate(-8 22 38)" />
      <path d="M31 30c-7-2-15-1-15 3 0 5 14 2 14 7 0 5-9 5-16 3" stroke="#fff" strokeWidth="4" fill="none" />
      <path d="M14 37c8 0 16-2 22-7" stroke="#e9c646" strokeWidth="2" fill="none" opacity=".8" />
    </svg>
    <span className="absolute top-3.5 left-[43px] text-[21px] leading-6 font-bold text-[#5f9bd8]">
      极光下载站
    </span>
    <span className="absolute top-10 left-[45px] font-['Liberation_Sans',sans-serif] text-base leading-5 text-[#3fae62]/70">
      www.xz7.com
    </span>
    <div className="absolute top-0 right-0 flex h-[39px] w-2.5 flex-col gap-px rounded-tl-sm bg-[#4b5160] pt-1.5 pl-1">
      {meterBars.map((n) => (
        <div key={n} className={`h-0.5 w-1 ${n < 4 ? "bg-[#24272f]" : n < 7 ? "bg-[#e0b84a]" : "bg-[#b4dc50]"}`} />
      ))}
    </div>
  </div>
);

const App = () => {
  return (
    <div className="relative flex h-screen flex-col overflow-hidden bg-white font-['Open_Sans','Noto_Sans_CJK_SC',sans-serif] text-xs whitespace-nowrap">
      <TitleBar />
      <MenuRow />
      <Ribbon />
      <div className="flex min-h-0 flex-1 bg-[#f5f7f9]">
        <DocumentPage />
        <ScrollBar />
        <StylePanel />
        <SideStrip />
      </div>
      <StatusBar />
      <FloatingTools />
    </div>
  );
};

export default App;
